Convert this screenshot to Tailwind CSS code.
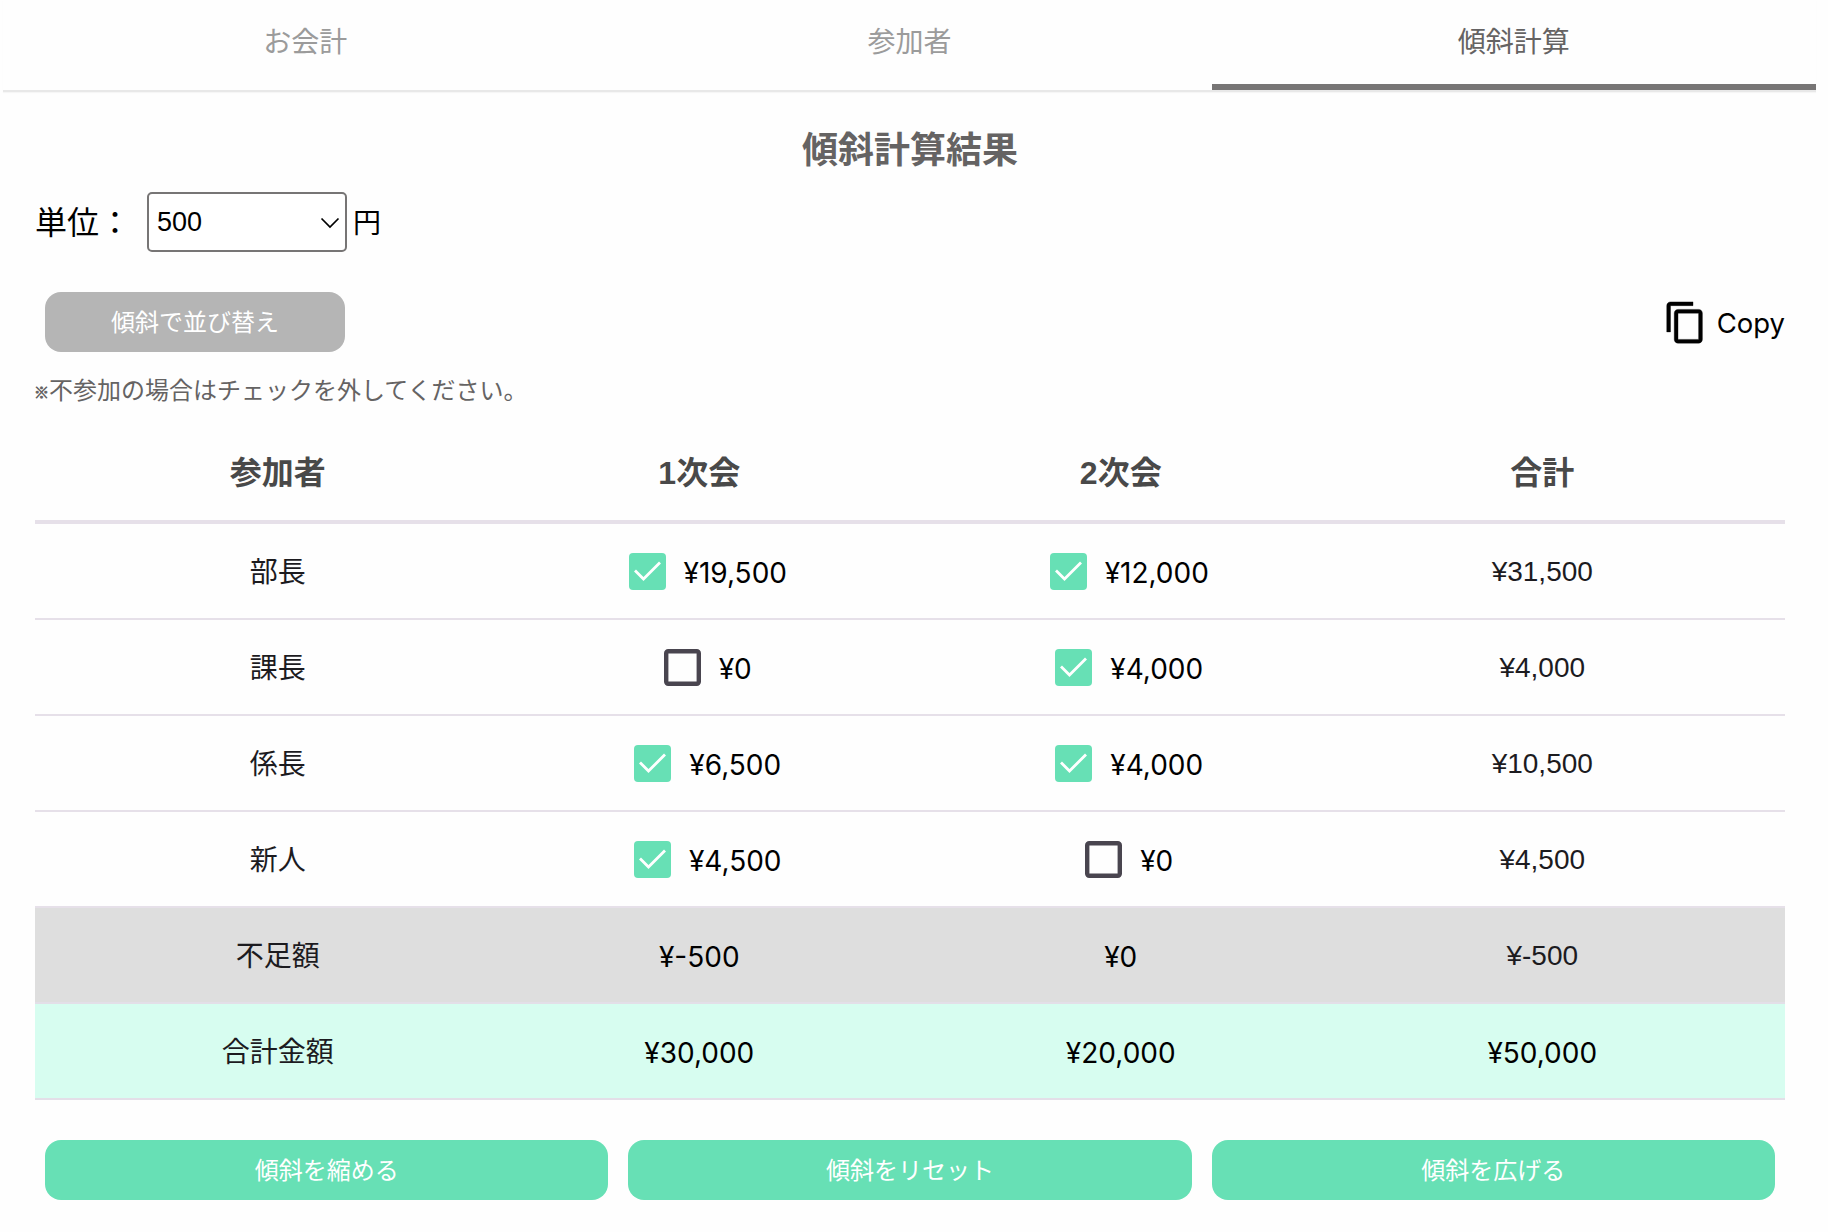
<!DOCTYPE html>
<html lang="ja">
<head>
    <meta charset="UTF-8">
    <meta name="viewport" content="width=device-width, initial-scale=1.0">
    <title>傾斜計算</title>
    <script src="https://cdn.jsdelivr.net/npm/@tailwindcss/browser@4"></script>
</head>
<body class="bg-[#fefefe] text-black font-['Liberation_Sans','Noto_Sans_CJK_JP',sans-serif] overflow-hidden">
    <nav class="ml-[3px] w-[1813px] h-[92px] grid grid-cols-3 text-[28px] text-[#9b9b9b] text-center leading-[86px] border-b-2 border-[#e8e8e8] shadow-[0_1px_1px_#f6f6f6]">
        <a class="h-[90px]">お会計</a>
        <a class="h-[90px]">参加者</a>
        <a class="h-[90px] text-[#656363] border-b-6 border-[#777575]">傾斜計算</a>
    </nav>

    <main class="ml-[35px] w-[1750px]">
        <h1 class="pt-[34px] text-[36px] leading-[50px] font-bold text-center text-[#656363]">傾斜計算結果</h1>

        <div class="mt-4 h-[60px] flex items-center">
            <label for="unit" class="w-28 pt-px text-[32px] whitespace-nowrap">単位：</label>
            <div class="relative w-50 h-[60px]">
                <select id="unit" class="appearance-none w-full h-full pl-2 border-2 border-[#777575] rounded-[5px] bg-white text-[27px]">
                    <option>100</option>
                    <option selected>500</option>
                    <option>1000</option>
                </select>
                <svg class="absolute right-[7px] top-[25px] w-5 h-3 pointer-events-none" viewBox="0 0 20 12" fill="none" stroke="black" stroke-width="1.700"><path d="M1.500 1.500 10 10l8.500-8.500"/></svg>
            </div>
            <span class="ml-[6px] pt-[3px] text-[28px]">円</span>
        </div>

        <div class="mt-10 flex justify-between items-center">
            <button class="ml-[10px] w-75 h-[60px] pt-[2px] rounded-2xl bg-[#b5b5b5] text-white text-2xl">傾斜で並び替え</button>
            <button class="flex items-center font-['Inter',sans-serif] text-[27.5px]">
                <svg class="w-[45px] h-[45px] mr-[9px]" viewBox="0 0 24 24" stroke="black" stroke-width="0.200"><path d="M16 1H4c-1.1 0-2 .9-2 2v14h2V3h12V1zm3 4H8c-1.1 0-2 .9-2 2v14c0 1.1.9 2 2 2h11c1.1 0 2-.9 2-2V7c0-1.1-.9-2-2-2zm0 16H8V7h11v14z"/></svg>
                <span class="pt-[3px]">Copy</span>
            </button>
        </div>

        <p class="mt-[21px] h-[35px] leading-9 text-2xl text-[#656363] flex"><span class="-ml-px w-[15px] text-[15px] [-webkit-text-stroke:0.700px_#656363] pt-[2px]">※</span>不参加の場合はチェックを外してください。</p>

        <div id="tabla" class="mt-3 text-[28px] text-[#1c1b1f]">
            <div class="h-[104px] pt-[6px] px-8 grid grid-cols-4 items-center text-center text-[32px] font-bold text-[#494949] border-b-4 border-[#e6e0e9]">
                <div>参加者</div>
                <div>1次会</div>
                <div>2次会</div>
                <div>合計</div>
            </div>
            <div id="rows"></div>
            <div class="h-24 px-8 grid grid-cols-4 items-center text-center bg-[#dedede] border-b-2 border-[#e3dfe8]">
                <div class="pt-[3px]">不足額</div>
                <div class="pt-[3px] font-['Inter'] text-[28px] text-black">¥-500</div>
                <div class="pt-[3px] font-['Inter'] text-[28px] text-black">¥0</div>
                <div class="pt-px">¥-500</div>
            </div>
            <div class="h-24 px-8 grid grid-cols-4 items-center text-center bg-[#d7fdf0] border-b-2 border-[#e3dfe8]">
                <div class="pt-[3px]">合計金額</div>
                <div class="pt-[3px] font-['Inter'] text-[28px] text-black">¥30,000</div>
                <div class="pt-[3px] font-['Inter'] text-[28px] text-black">¥20,000</div>
                <div class="pt-[3px] font-['Inter'] text-[28px] text-black">¥50,000</div>
            </div>
        </div>

        <div class="mt-10 px-[10px] grid grid-cols-3 gap-5 text-2xl text-white">
            <button class="h-[60px] pt-[2px] rounded-2xl bg-[#67e0b5]">傾斜を縮める</button>
            <button class="h-[60px] pt-[2px] rounded-2xl bg-[#67e0b5]">傾斜をリセット</button>
            <button class="h-[60px] pt-[2px] rounded-2xl bg-[#67e0b5]">傾斜を広げる</button>
        </div>
    </main>

    <script>
        const members = [
            { name: "部長", fees: [19500, 12000] },
            { name: "課長", fees: [0, 4000] },
            { name: "係長", fees: [6500, 4000] },
            { name: "新人", fees: [4500, 0] },
        ];
        const yen = n => "¥" + n.toLocaleString("en-US");

        // 参加していない会はチェックなし
        function checkbox(checked) {
            return checked
                ? `<svg class="w-[37px] h-[37px]" viewBox="0 0 37 37"><rect width="37" height="37" rx="4" fill="#67e0b5"/><path d="M6 17.500 14.500 26 31 9.500" fill="none" stroke="white" stroke-width="2.800"/></svg>`
                : `<svg class="w-[37px] h-[37px]" viewBox="0 0 37 37"><rect x="2.200" y="2.200" width="32.600" height="32.600" rx="2" fill="none" stroke="#49454f" stroke-width="4.400"/></svg>`;
        }

        document.getElementById("rows").innerHTML = members.map(m => `
            <div class="h-24 px-8 grid grid-cols-4 items-center text-center border-b-2 border-[#e6e0e9]">
                <div class="pt-[3px]">${m.name}</div>
                ${m.fees.map(fee => `
                <div class="pl-[17px] flex justify-center items-center gap-[18px] font-['Inter'] text-[28px] text-black">${checkbox(fee > 0)}<span class="pt-[3px]">${yen(fee)}</span></div>`).join("")}
                <div class="pt-px">${yen(m.fees[0] + m.fees[1])}</div>
            </div>`).join("");
    </script>
</body>
</html>
